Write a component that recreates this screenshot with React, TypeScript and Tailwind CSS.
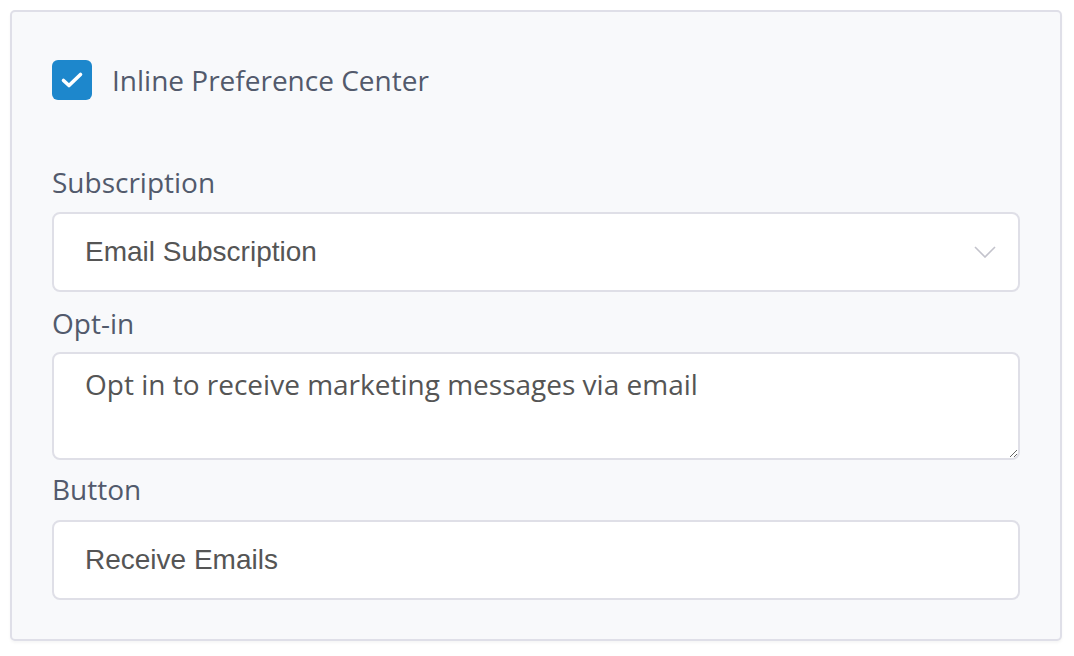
import React from 'react';

const labelCls =
  "block text-[28px] leading-[36px] text-[#525a6c] font-['Open_Sans',sans-serif]";

const boxCls =
  'w-full border-2 border-[#dfdfe7] rounded-[8px] bg-white';

export default function App() {
  return (
    <div className="min-h-screen bg-white p-[10px]">
      <div className="w-[1052px] h-[631px] border-2 border-[#dfdfe8] rounded-[5px] bg-[#f8f9fb] shadow-[0_2px_3px_rgba(0,0,0,0.04)] px-[40px] pt-[48px]">
        <div className="flex items-center gap-[20px]">
          <div className="w-[40px] h-[40px] rounded-[6px] bg-[#1d87cc] flex items-center justify-center">
            <svg width="24" height="24" viewBox="0 0 24 24" fill="none">
              <path
                d="M3.5 12.5l5.5 5L20.5 6.5"
                stroke="white"
                strokeWidth="3.6"
                strokeLinecap="round"
                strokeLinejoin="round"
              />
            </svg>
          </div>
          <span className="text-[28px] leading-[36px] text-[#525a6c] font-['Open_Sans',sans-serif]">
            Inline Preference Center
          </span>
        </div>

        <div className="mt-[64px]">
          <label className={labelCls}>Subscription</label>
          <div className={`${boxCls} mt-[12px] h-[80px] flex items-center justify-between pl-[31px] pr-[22px]`}>
            <span className="text-[28px] text-[#555555] font-['Liberation_Sans',Arial,sans-serif]">
              Email Subscription
            </span>
            <svg width="22" height="12" viewBox="0 0 22 12" fill="none">
              <path d="M1 1l10 10L21 1" stroke="#c3c3cc" strokeWidth="1.6" />
            </svg>
          </div>
        </div>

        <div className="mt-[13px]">
          <label className={labelCls}>Opt-in</label>
          <textarea
            readOnly
            defaultValue="Opt in to receive marketing messages via email"
            className={`${boxCls} mt-[11px] h-[108px] block resize-y outline-none pl-[31px] pt-[12px] text-[28px] leading-[36px] text-[#555555] font-['Open_Sans',sans-serif]`}
          />
        </div>

        <div className="mt-[11px]">
          <label className={labelCls}>Button</label>
          <input
            readOnly
            defaultValue="Receive Emails"
            className={`${boxCls} mt-[13px] h-[80px] block outline-none pl-[31px] text-[28px] text-[#555555] font-['Liberation_Sans',Arial,sans-serif]`}
          />
        </div>
      </div>
    </div>
  );
}
